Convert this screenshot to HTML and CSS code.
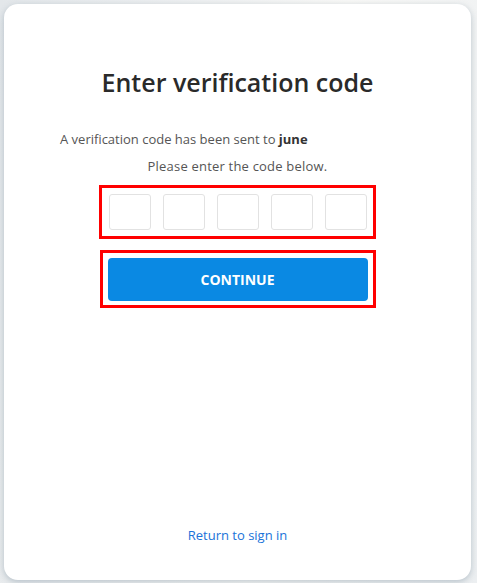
FILE: index.html
```html
<!DOCTYPE html>
<html>
<head>
    <title>Enter verification code</title>
    <link rel="stylesheet" href="styles.css">
</head>
<body>
    <div class="page">
        <form class="card" id="verifyForm">
            <h2 class="title">Enter verification code</h2>

            <p class="sent">A verification code has been sent to <b>june</b></p>
            <p class="hint">Please enter the code below.</p>

            <div class="code-group">
                <input type="text" maxlength="1" class="digit">
                <input type="text" maxlength="1" class="digit">
                <input type="text" maxlength="1" class="digit">
                <input type="text" maxlength="1" class="digit">
                <input type="text" maxlength="1" class="digit">
            </div>

            <div class="button-group">
                <button type="button" class="continue">CONTINUE</button>
            </div>

            <a href="#" class="back">Return to sign in</a>
        </form>
    </div>
</body>
</html>
```

FILE: styles.css
```css
body {
    margin: 0;
    height: 583px;
    overflow: hidden;
    background: linear-gradient(100deg, #e3e7ea 0%, #eef0f1 35%, #f8f8f6 60%, #eceff1 100%);
    font-family: "Open Sans", "DejaVu Sans", sans-serif;
}
.page {
    padding: 4px 6px 3px 4px;
}
.card {
    height: 576px;
    box-sizing: border-box;
    background: #fff;
    border-radius: 14px;
    box-shadow: 0 2px 6px rgba(120, 140, 155, 0.45);
    display: flex;
    flex-direction: column;
    align-items: center;
    padding-top: 62px;
}
.title {
    margin: 0;
    font-size: 25px;
    font-weight: 600;
    line-height: 32px;
    color: #2a2a2a;
}
.sent {
    align-self: flex-start;
    margin: 32px 0 0 56px;
    font-size: 13px;
    line-height: 18px;
    color: #555;
}
.sent b {
    color: #333;
}
.hint {
    margin: 9px 0 0;
    font-size: 13px;
    line-height: 18px;
    letter-spacing: 0.2px;
    color: #555;
}
.code-group {
    margin-top: 10px;
    width: 277px;
    height: 54px;
    box-sizing: border-box;
    border: 3px solid #f00;
    display: flex;
    align-items: center;
    justify-content: center;
    gap: 12px;
}
.digit {
    width: 42px;
    height: 36px;
    box-sizing: border-box;
    border: 1px solid #e2e2e2;
    border-radius: 3px;
    padding: 0;
    text-align: center;
}
.button-group {
    margin-top: 11px;
    width: 276px;
    height: 58px;
    box-sizing: border-box;
    border: 3px solid #f00;
    display: flex;
    align-items: center;
    justify-content: center;
}
.continue {
    width: 260px;
    height: 43px;
    border: none;
    border-radius: 4px;
    background: #0a89e3;
    color: #fff;
    font-family: inherit;
    font-size: 14px;
    font-weight: 700;
}
.back {
    margin-top: auto;
    margin-bottom: 36px;
    font-size: 13px;
    color: #1a73d9;
    text-decoration: none;
}
```
